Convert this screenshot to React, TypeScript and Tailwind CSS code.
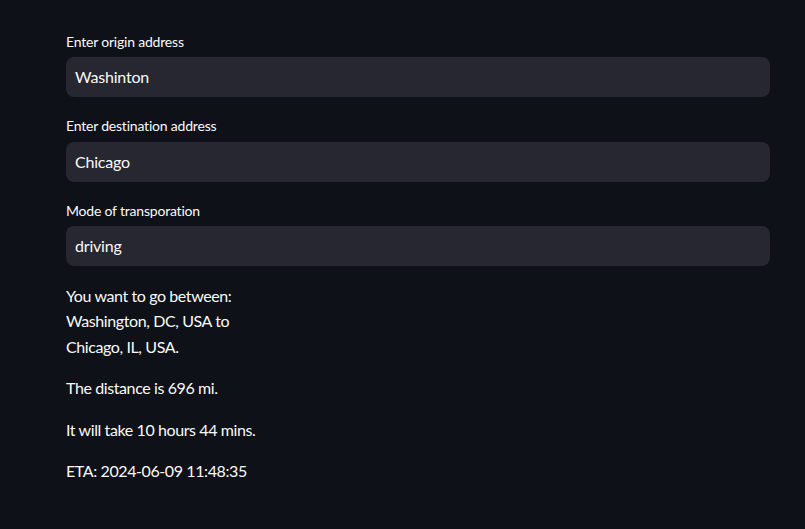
const fields = [
  { label: 'Enter origin address', value: 'Washinton' },
  { label: 'Enter destination address', value: 'Chicago' },
  { label: 'Mode of transporation', value: 'driving' },
]

export default function App() {
  return (
    <div
      className="min-h-[529px] w-full bg-[#0e1117] text-[#fafafa]"
      style={{ fontFamily: 'Lato, "Noto Sans", sans-serif' }}
    >
      <div className="flex flex-col gap-[16.5px] pl-[66px] pr-[35px] pt-[29px]">
        {fields.map((f) => (
          <div key={f.label} className="flex flex-col">
            <label className="mb-1 flex h-6 items-center text-[14px] tracking-[-0.2px]">{f.label}</label>
            <div className="flex h-10 items-center rounded-lg bg-[#262730] px-[9px] text-[16px] tracking-[-0.2px]">
              {f.value}
            </div>
          </div>
        ))}

        <div className="flex flex-col gap-4 text-[16px] leading-[25.6px] tracking-[-0.4px]">
          <p>
            You want to go between:
            <br />
            Washington, DC, USA to
            <br />
            Chicago, IL, USA.
          </p>
          <p>The distance is 696 mi.</p>
          <p>It will take 10 hours 44 mins.</p>
          <p>ETA: 2024-06-09 11:48:35</p>
        </div>
      </div>
    </div>
  )
}
